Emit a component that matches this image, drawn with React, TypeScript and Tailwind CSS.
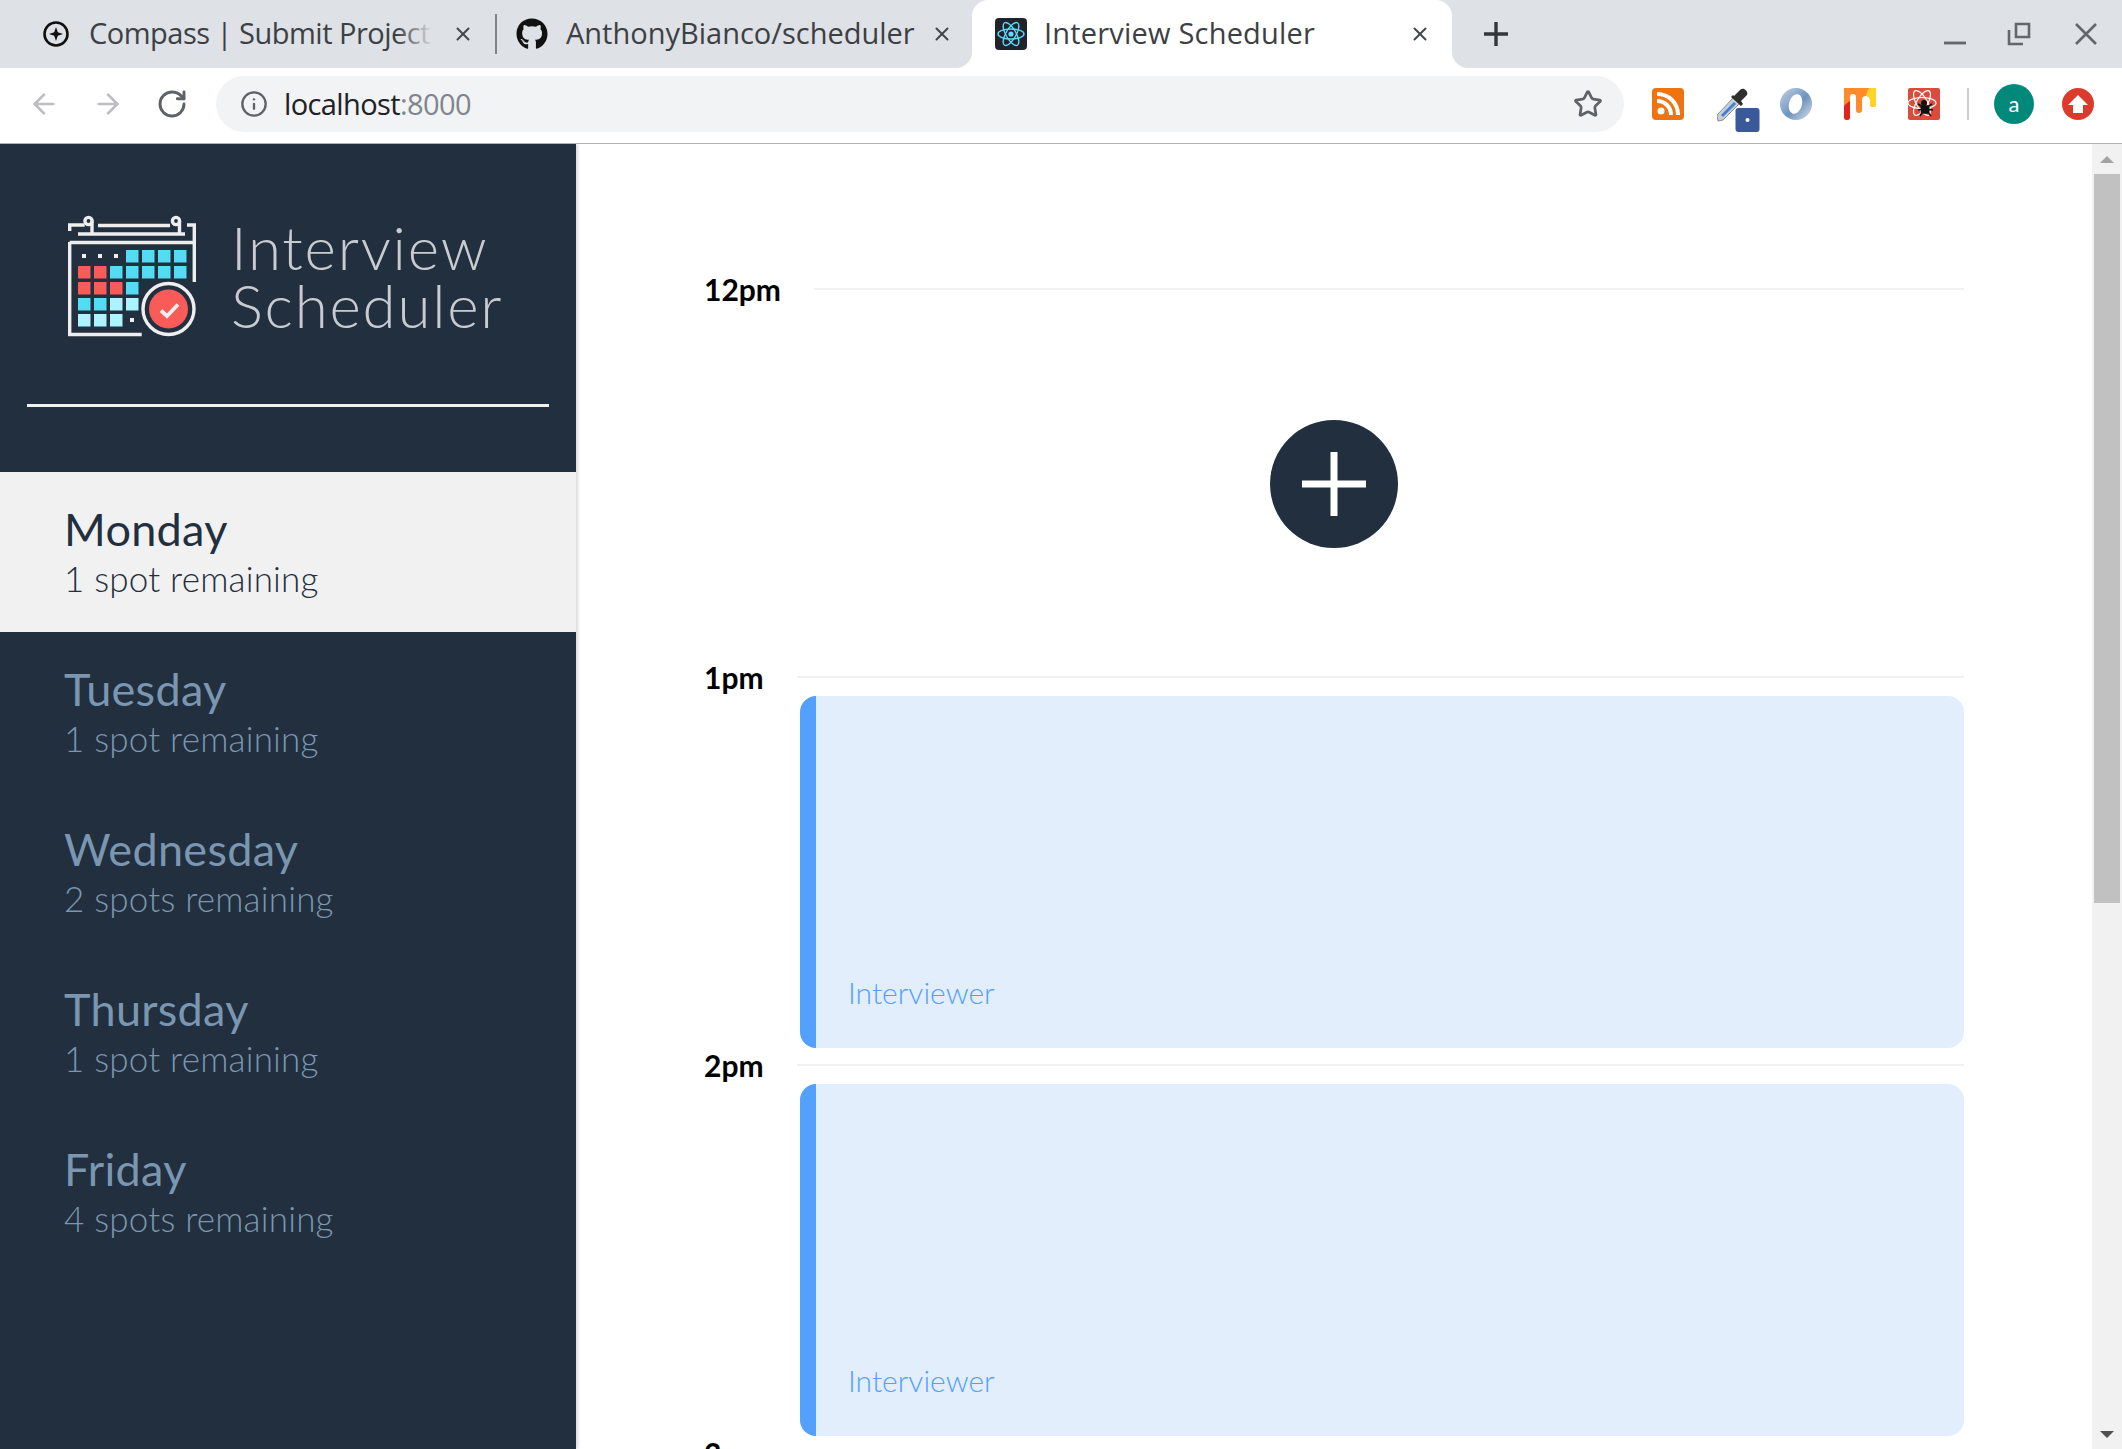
import { ArrowLeft, ArrowRight, Info, RotateCw, Star, X } from "lucide-react";
import { FaGithub } from "react-icons/fa";

const days = [
  { name: "Monday", spots: "1 spot remaining", selected: true },
  { name: "Tuesday", spots: "1 spot remaining" },
  { name: "Wednesday", spots: "2 spots remaining" },
  { name: "Thursday", spots: "1 spot remaining" },
  { name: "Friday", spots: "4 spots remaining" },
];

const cyan = "#55dbf3";
const red = "#f85b58";
const light = "#aaf3ff";
const cells: (string | null)[][] = [
  [null, null, null, cyan, cyan, cyan, cyan],
  [red, red, cyan, cyan, cyan, cyan, cyan],
  [red, red, red, cyan],
  [cyan, cyan, light, light],
  [light, light, light, null],
];

function Logo() {
  return (
    <svg width="128" height="128" viewBox="0 0 128 128" fill="none" stroke="#eeeeee" strokeWidth="3.4" className="shrink-0">
      <circle cx="20.5" cy="9" r="3.6" />
      <circle cx="108" cy="9" r="3.6" />
      <path d="M24 9v13M111.5 9v13M10 22h107M30 13.5h72M1.7 19v-6h15M119 13h7.3v57M1.7 30.5h124.6M1.7 30v92.5h72" />
      {cells.map((row, r) =>
        row.map((c, i) =>
          c ? (
            <rect key={`${r}-${i}`} x={10 + i * 16} y={38 + r * 16} width="12.5" height="12.5" fill={c} stroke="none" />
          ) : (
            <rect key={`${r}-${i}`} x={14 + i * 16} y={42 + r * 16} width="4" height="4" fill="#eeeeee" stroke="none" />
          ),
        ),
      )}
      <circle cx="100.5" cy="97" r="25.5" />
      <circle cx="100.5" cy="97" r="19.5" fill={red} stroke="none" />
      <path d="M93 98.5l6 5.5 11-11.5" strokeWidth="3.8" />
    </svg>
  );
}

function CompassIcon() {
  return (
    <svg width="28" height="28" viewBox="0 0 28 28" fill="none" className="shrink-0">
      <circle cx="14" cy="14" r="11.5" stroke="#111" strokeWidth="2.6" />
      <path d="M14 7l1.8 5.2L21 14l-5.2 1.8L14 21l-1.8-5.2L7 14l5.2-1.8z" fill="#111" />
    </svg>
  );
}

function ReactFavicon() {
  return (
    <svg width="32" height="32" viewBox="0 0 32 32" fill="none" className="shrink-0">
      <rect width="32" height="32" rx="4" fill="#20232a" />
      <g stroke="#61dafb" strokeWidth="1.4">
        <ellipse cx="16" cy="16" rx="13" ry="5" />
        <ellipse cx="16" cy="16" rx="13" ry="5" transform="rotate(60 16 16)" />
        <ellipse cx="16" cy="16" rx="13" ry="5" transform="rotate(120 16 16)" />
      </g>
      <circle cx="16" cy="16" r="2.6" fill="#61dafb" />
    </svg>
  );
}

function RssIcon() {
  return (
    <svg width="32" height="32" viewBox="0 0 32 32" fill="none">
      <rect width="32" height="32" rx="4" fill="#ef730f" />
      <circle cx="9" cy="23" r="3.5" fill="#fff" />
      <path d="M5 13c8 0 14 6 14 14M5 6c12 0 21 9 21 21" stroke="#fff" strokeWidth="4" />
    </svg>
  );
}

function DropperIcon() {
  return (
    <svg width="44" height="44" viewBox="0 0 44 44" fill="none">
      <path d="M0 27L17 9l6 6L6 32l-5 1z" fill="#c9ced4" stroke="#8b8f94" strokeWidth="1" />
      <path d="M4 27L17 14l2 2L6 29z" fill="#3f7fd6" />
      <path d="M17 8l6-6c4-4 10 3 6 6l-5 5 2 3-2 2-10-9 2-2z" fill="#2f2f2f" />
      <rect x="18.5" y="20" width="24" height="24" rx="3" fill="#3b5998" />
      <circle cx="30.5" cy="32" r="2" fill="#fff" />
    </svg>
  );
}

function JsonRingIcon() {
  return (
    <svg width="32" height="32" viewBox="0 0 32 32" fill="none">
      <defs>
        <linearGradient id="ringFill" x1="0" y1="0" x2="1" y2="1">
          <stop offset="0" stopColor="#c4d3e6" />
          <stop offset="0.55" stopColor="#6f93bd" />
          <stop offset="1" stopColor="#dbe4ee" />
        </linearGradient>
      </defs>
      <circle cx="16" cy="16" r="16" fill="url(#ringFill)" />
      <ellipse cx="15.5" cy="16" rx="6.5" ry="10" fill="#fff" transform="rotate(15 15.5 16)" />
    </svg>
  );
}

function PaintIcon() {
  return (
    <svg width="32" height="32" viewBox="0 0 32 32">
      <path d="M0 0h32v16a3 3 0 0 1-6 0v-4a4 4 0 0 0-8 0v10a3 3 0 0 1-6 0V9a3 3 0 0 0-6 0v20a3 3 0 0 1-6 0z" fill="#ff8a2b" />
      <path d="M26 0h6v16a3 3 0 0 1-6 0v-4c0-2-2-4-4-4 1-4 2-8 4-8z" fill="#ffd426" />
      <path d="M0 18c2-2 4-4 6-5v16a3 3 0 0 1-6 0z" fill="#e3231c" />
    </svg>
  );
}

function ReactBugIcon() {
  return (
    <svg width="32" height="32" viewBox="0 0 32 32" fill="none">
      <rect width="32" height="32" rx="2" fill="#db4c3c" />
      <g stroke="#fff" strokeWidth="1.2">
        <ellipse cx="14" cy="15" rx="14" ry="5.5" />
        <ellipse cx="14" cy="15" rx="14" ry="5.5" transform="rotate(60 14 15)" />
        <ellipse cx="14" cy="15" rx="14" ry="5.5" transform="rotate(120 14 15)" />
      </g>
      <circle cx="16" cy="15" r="3" fill="#111" />
      <path d="M13 18h8l-1 7h-6zM10 16l5 3M10 22l5-1M12 28l3-5M24 16l-5 3M25 22l-5-1M23 28l-4-5" stroke="#111" strokeWidth="1.6" fill="#111" />
    </svg>
  );
}

function ChromeTab({ children, closeClass }: { children: React.ReactNode; closeClass: string }) {
  return (
    <div className="flex h-full items-center">
      {children}
      <X className={`h-[22px] w-[22px] shrink-0 text-[#45494d] ${closeClass}`} strokeWidth={2.2} />
    </div>
  );
}

function TimeSlot({ time, children }: { time: string; children?: React.ReactNode }) {
  return (
    <article className="h-[388px] shrink-0">
      <header className="flex h-[38px] items-center gap-[33px]">
        <h4 className="text-[30px] leading-[38px] font-bold text-black">{time}</h4>
        <hr className="flex-1 border-t-2 border-[#f1f1f1]" />
      </header>
      {children}
    </article>
  );
}

function EmptyCard() {
  return (
    <div className="flex h-[352px] justify-center">
      <button className="my-auto flex h-[128px] w-[128px] items-center justify-center rounded-full bg-[#222f3e]">
        <svg width="68" height="68" viewBox="0 0 68 68" stroke="#fff" strokeWidth="7">
          <path d="M34 2v64M2 34h64" />
        </svg>
      </button>
    </div>
  );
}

function FormCard() {
  return (
    <div className="ml-[96px] flex h-[352px] items-end rounded-2xl border-l-16 border-[#54a0ff] bg-[#e3eefd] pb-[37px] pl-[32px]">
      <span className="text-[30px] leading-[38px] font-light text-[#54a0ff]">Interviewer</span>
    </div>
  );
}

export default function App() {
  return (
    <div className="flex h-[1449px] flex-col overflow-hidden bg-white font-['Lato',sans-serif]">
      {/* Browser tabs */}
      <div className="flex h-[68px] shrink-0 bg-[linear-gradient(#dee1e6_50%,#fff_50%)] font-['Open_Sans',sans-serif] text-[29px] text-[#3c4043]">
        <div className="flex w-[972px] shrink-0 items-center rounded-br-2xl bg-[#dee1e6] pl-[42px]">
          <ChromeTab closeClass="ml-[19px]">
            <CompassIcon />
            <div className="relative -mt-[2px] ml-[19px] w-[344px] overflow-hidden tracking-[-0.5px] whitespace-nowrap">
              Compass | Submit Project
              <span className="absolute inset-y-0 right-0 w-[36px] bg-[linear-gradient(90deg,transparent,#dee1e6)]" />
            </div>
          </ChromeTab>
          <div className="ml-[21px] h-[40px] w-[2px] bg-[#7f8388]" />
          <ChromeTab closeClass="ml-[14px]">
            <FaGithub className="ml-[19px] h-[32px] w-[32px] shrink-0 text-[#111]" />
            <div className="-mt-[2px] ml-[18px] w-[351px] whitespace-nowrap">AnthonyBianco/scheduler</div>
          </ChromeTab>
        </div>
        <div className="flex w-[480px] shrink-0 items-center rounded-t-2xl bg-white pl-[23px]">
          <ChromeTab closeClass="ml-[93px]">
            <ReactFavicon />
            <div className="-mt-[2px] ml-[17px] w-[272px] whitespace-nowrap tracking-[0.2px]">Interview Scheduler</div>
          </ChromeTab>
        </div>
        <div className="flex flex-1 items-center rounded-bl-2xl bg-[#dee1e6]">
          <svg width="26" height="26" viewBox="0 0 26 26" stroke="#33363a" strokeWidth="3.4" className="ml-[31px]">
            <path d="M13 1v24M1 13h24" />
          </svg>
          {/* window controls */}
          <div className="ml-auto flex items-center pr-[24px]">
            <svg width="24" height="24" viewBox="0 0 24 24" stroke="#63676b" strokeWidth="2.8" fill="none">
              <path d="M1 21h22" />
            </svg>
            <svg width="24" height="24" viewBox="0 0 24 24" stroke="#63676b" strokeWidth="2.6" fill="none" className="ml-[40px]">
              <path d="M9 2h13v13H9zM2 8v14h14" />
            </svg>
            <svg width="24" height="24" viewBox="0 0 24 24" stroke="#63676b" strokeWidth="2.6" fill="none" className="ml-[43px]">
              <path d="M2 2l20 20M22 2L2 22" />
            </svg>
          </div>
        </div>
      </div>

      {/* Toolbar */}
      <div className="relative flex h-[76px] shrink-0 items-center border-b border-[#b0b1b3] bg-white pb-[3px]">
        <ArrowLeft className="ml-[28px] h-[32px] w-[32px] text-[#bbbdc0]" strokeWidth={2} />
        <ArrowRight className="ml-[32px] h-[32px] w-[32px] text-[#bbbdc0]" strokeWidth={2} />
        <RotateCw className="ml-[32px] h-[32px] w-[32px] text-[#5f6368]" strokeWidth={2.2} />
        <div className="ml-[28px] flex h-[56px] w-[1408px] items-center rounded-full bg-[#f1f3f4] pl-[24px] font-['Open_Sans',sans-serif] text-[29px] tracking-[-0.6px]">
          <Info className="h-[28px] w-[28px] text-[#5f6368]" strokeWidth={2} />
          <span className="ml-[16px] text-[#202124]">localhost</span>
          <span className="text-[#80868b]">:8000</span>
          <Star className="mr-[21px] ml-auto h-[30px] w-[30px] text-[#5f6368]" strokeWidth={2.2} />
        </div>
        <div className="ml-[28px] flex items-center">
          <RssIcon />
          <div className="relative ml-[33px] h-[32px] w-[32px]">
            <div className="absolute top-0 left-0">
              <DropperIcon />
            </div>
          </div>
          <div className="ml-[31px]">
            <JsonRingIcon />
          </div>
          <div className="ml-[32px]">
            <PaintIcon />
          </div>
          <div className="ml-[32px]">
            <ReactBugIcon />
          </div>
          <div className="ml-[27px] h-[32px] w-[2px] bg-[#cdcdcd]" />
          <div className="ml-[25px] flex h-[40px] w-[40px] items-center justify-center rounded-full bg-[#00897b] text-[22px] leading-none text-white">
            a
          </div>
          <div className="ml-[28px] flex h-[32px] w-[32px] items-center justify-center rounded-full bg-[#db3a2c]">
            <svg width="20" height="18" viewBox="0 0 20 18" fill="#fff">
              <path d="M10 0l10 10h-5v8H5v-8H0z" />
            </svg>
          </div>
        </div>
      </div>

      {/* Page */}
      <div className="flex min-h-0 flex-1">
        <aside className="flex w-[576px] shrink-0 flex-col bg-[#222f3e] shadow-[2px_0_3px_rgba(0,0,0,0.15)]">
          <div className="mx-[27px] flex h-[263px] shrink-0 items-start border-b-[3px] border-[#f1f1f1] pt-[68px] pl-[41px]">
            <Logo />
            <div className="mt-[6px] ml-[35px] text-[60px] leading-[58px] font-light tracking-[1.8px] text-[#c8ccd0]">
              Interview
              <br />
              Scheduler
            </div>
          </div>
          <ul className="mt-[65px] flex flex-col">
            {days.map((d) => (
              <li
                key={d.name}
                className={`flex h-[160px] flex-col justify-center pl-[64px] ${
                  d.selected ? "bg-[#f1f1f1] text-[#222f3e]" : "text-[#7a96b0]"
                }`}
              >
                <h2 className="text-[45px] leading-[52px] font-normal tracking-[0.3px]">{d.name}</h2>
                <h3 className="text-[35px] leading-[46px] font-light tracking-[0.2px]">{d.spots}</h3>
              </li>
            ))}
          </ul>
        </aside>

        <main className="min-w-0 flex-1 overflow-hidden pt-[126px] pr-[128px] pl-[128px]">
          <TimeSlot time="12pm">
            <EmptyCard />
          </TimeSlot>
          <TimeSlot time="1pm">
            <FormCard />
          </TimeSlot>
          <TimeSlot time="2pm">
            <FormCard />
          </TimeSlot>
          <TimeSlot time="3pm" />
        </main>

        {/* Scrollbar */}
        <div className="flex w-[30px] shrink-0 flex-col items-center bg-[#f1f1f1]">
          <div className="flex h-[30px] shrink-0 items-center justify-center">
            <div className="h-0 w-0 border-x-[7px] border-b-[7px] border-x-transparent border-b-[#a3a3a3]" />
          </div>
          <div className="h-[729px] w-[26px] shrink-0 bg-[#c1c1c1]" />
          <div className="mt-auto flex h-[29px] shrink-0 items-center justify-center">
            <div className="h-0 w-0 border-x-[7px] border-t-[7px] border-x-transparent border-t-[#505050]" />
          </div>
        </div>
      </div>
    </div>
  );
}
